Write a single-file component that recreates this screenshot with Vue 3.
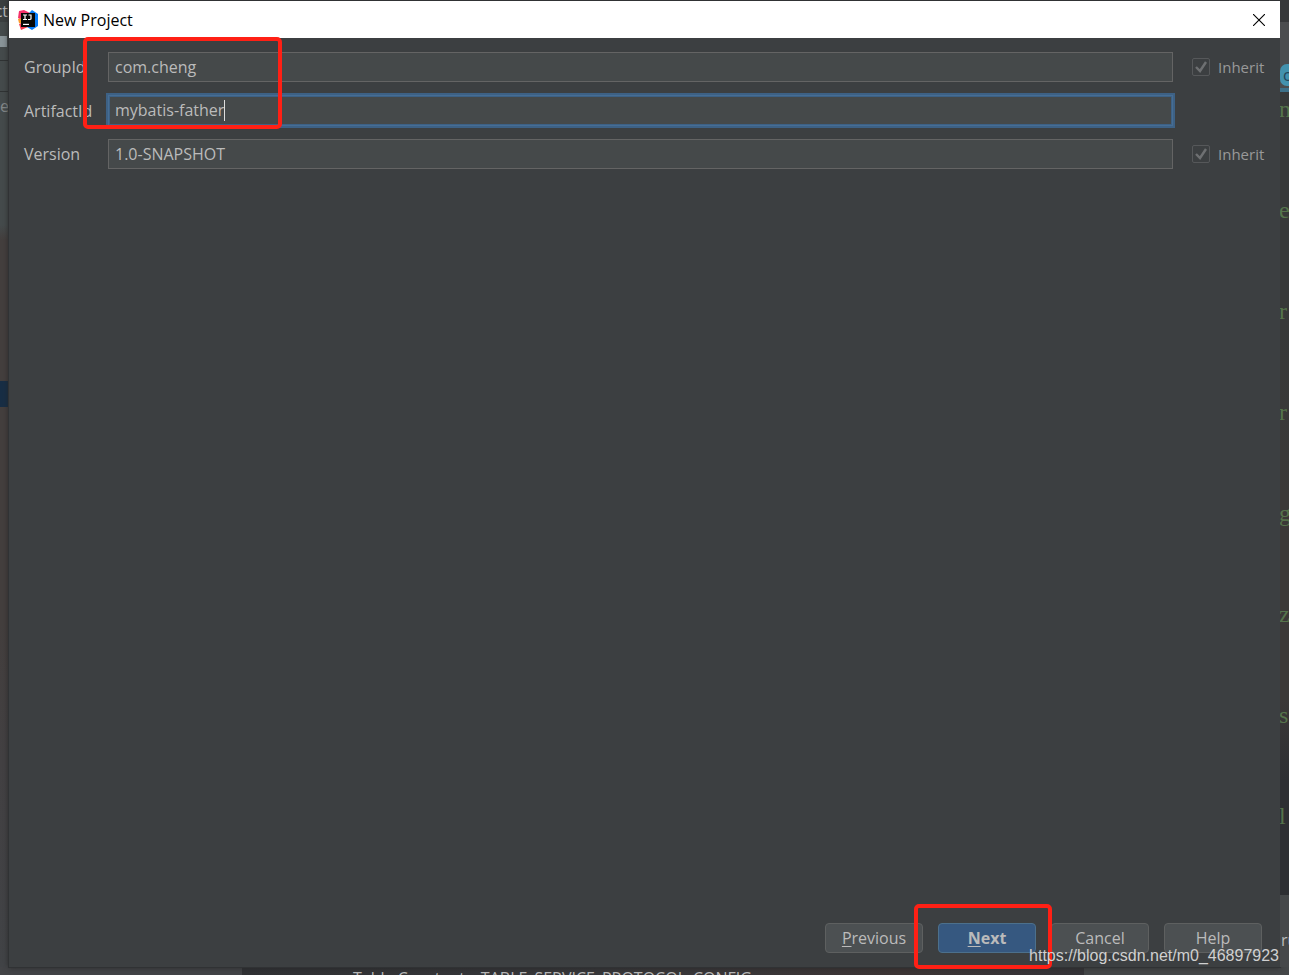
<script setup>
import { ref } from 'vue'

const fields = ref([
  { id: 'group', label: 'GroupId', value: 'com.cheng', inherit: true, active: false },
  { id: 'artifact', label: 'ArtifactId', value: 'mybatis-father', inherit: false, active: true },
  { id: 'version', label: 'Version', value: '1.0-SNAPSHOT', inherit: true, active: false },
])

const buttons = [
  { key: 'P', rest: 'revious', kind: 'mnemonic' },
  { key: 'N', rest: 'ext', kind: 'mnemonic primary' },
  { key: 'C', rest: 'ancel', kind: '' },
  { key: 'H', rest: 'elp', kind: '' },
]

const codeLetters = ['n', 'e', 'r', 'r', 'g', 'z', 's', 'l']
</script>

<template>
  <div class="desktop">
    <aside class="ide-left" aria-hidden="true">
      <span class="menu-end">ct</span>
      <span class="tool-chip"></span>
      <span class="tab-end">e</span>
      <span class="tree"></span>
      <span class="selection"></span>
    </aside>

    <main class="dialog">
      <header class="titlebar">
        <svg class="logo" viewBox="0 0 20 20" aria-hidden="true">
          <path d="M1 1 6 0 12 3 8 12 0 8Z" fill="#f5316a" />
          <path d="M0 9 4 8 7 15 1 13Z" fill="#fd9a2b" />
          <path d="M1 14 7 12 10 17 3 20Z" fill="#f43a50" />
          <path d="M11 3 14 0 20 4V16L14 20 9 17 16 9Z" fill="#087cfa" />
          <path d="M3 3H17V17H3Z" fill="#080808" />
          <path d="M5 5H9M7 5V9.500M5 9.500H9M10.500 5H13V9L12 9.500H10" fill="none" stroke="#fff" stroke-width="1.2" />
          <path d="M5 14.400H11" stroke="#fff" stroke-width="1.2" />
        </svg>
        <h1>New Project</h1>
        <button class="close" type="button" aria-label="Close">
          <svg viewBox="0 0 12 12" aria-hidden="true"><path d="M0 0 12 12M12 0 0 12" stroke="#000" stroke-width="1.1" /></svg>
        </button>
      </header>

      <form class="form" @submit.prevent>
        <div v-for="f in fields" :key="f.id" class="row">
          <label class="name" :for="f.id">{{ f.label }}</label>
          <div class="box" :class="{ active: f.active }">
            <input :id="f.id" v-model="f.value" type="text" spellcheck="false" autocomplete="off" />
            <span v-if="f.active" class="echo" aria-hidden="true">{{ f.value }}</span>
          </div>
          <label v-if="f.inherit" class="inherit">
            <input type="checkbox" checked disabled />
            <svg viewBox="0 0 18 18" aria-hidden="true"><path d="M4 9 8 13 14 4" fill="none" stroke="#6e7072" stroke-width="2.4" /></svg>
            <span>Inherit</span>
          </label>
        </div>
      </form>

      <footer class="actions">
        <button v-for="b in buttons" :key="b.key" type="button" :class="b.kind"><span>{{ b.key }}</span>{{ b.rest }}</button>
      </footer>
      <span class="mark mark-fields" aria-hidden="true"></span>
      <span class="mark mark-next" aria-hidden="true"></span>
    </main>

    <aside class="ide-right" aria-hidden="true">
      <span class="class-tab"><span>c</span></span>
      <span class="code"><span v-for="(c, i) in codeLetters" :key="i">{{ c }}</span></span>
      <span class="notice">ru</span>
    </aside>

    <div class="ide-bottom" aria-hidden="true">
      <span class="console">Table Constants &nbsp;TABLE_SERVICE_PROTOCOL_CONFIG</span>
      <span class="event">were detected...</span>
    </div>
    <span class="watermark">https://blog.csdn.net/m0_46897923</span>
  </div>
</template>

<style>
body { background: #353638; }
</style>

<style scoped>
* { box-sizing: border-box; }
.desktop {
  position: relative;
  display: grid;
  grid-template: 1fr 8px / 9px 1fr 9px;
  height: 100vh;
  overflow: hidden;
  font: 16px/22px "Open Sans", "Noto Sans", sans-serif;
  color: #bbb;
}
.ide-left {
  position: relative;
  overflow: hidden;
  background: linear-gradient(#3b3f40 0 22px, #454b4c 22px 225px, #443f3e 240px 620px, #434143 760px, #424447);
}
.ide-left > span { position: absolute; }
.menu-end { right: 1px; top: 0; }
.tool-chip { left: 0; top: 36px; width: 7px; height: 11px; background: #8a9599; }
.tab-end { right: 0; top: 95px; color: #85898a; }
.tree { left: 0; right: 0; top: 60px; height: 32px; border: solid #303334; border-width: 1px 0; }
.selection { left: 0; right: 0; top: 381px; height: 26px; background: #182e45; }
.dialog {
  position: relative;
  display: flex;
  flex-direction: column;
  min-width: 0;
  margin-top: 1px;
  background: #3c3f41;
  box-shadow: 0 0 0 1px #303234, 0 0 6px #222;
}
.titlebar {
  display: flex;
  align-items: center;
  height: 37px;
  padding: 0 15px 0 9px;
  background: #fff;
  color: #000;
}
.logo { width: 20px; height: 20px; }
h1 { margin: 0 auto 0 5px; font-size: 16px; line-height: 22px; font-weight: 400; }
.close { display: flex; padding: 0; border: 0; background: none; }
.close svg { width: 12px; height: 12px; }
.form { display: grid; gap: 13px; padding: 14px 15px 0; }
.row { display: grid; grid-template-columns: 84px 1fr 92px; align-items: center; }
.box { position: relative; height: 30px; border: 1px solid #646464; background: #45494a; }
.box.active { height: 31px; border-color: #466d94; box-shadow: 0 0 0 2px #3d6185, inset 0 0 0 1px #3d6185; }
.box input {
  display: block;
  width: 100%;
  height: 28px;
  padding: 0 6px;
  border: 0;
  outline: 0;
  background: none;
  color: #bbb;
  font: inherit;
}
.echo {
  position: absolute;
  left: 6px;
  top: 4px;
  height: 21px;
  border-right: 1px solid #ddd;
  color: transparent;
}
.inherit {
  position: relative;
  display: flex;
  align-items: center;
  gap: 8px;
  padding-left: 19px;
  font-size: 15px;
  color: #999;
}
.inherit input {
  appearance: none;
  width: 18px;
  height: 18px;
  margin: 0;
  border: 1px solid #56585a;
  border-radius: 2px;
}
.inherit svg { position: absolute; left: 19px; width: 18px; height: 18px; }
.actions { display: flex; justify-content: flex-end; gap: 15px; margin-top: auto; padding: 0 18px 14px; }
.actions button {
  width: 98px;
  height: 30px;
  padding: 0;
  border: 1px solid #5e6060;
  border-radius: 4px;
  background: #4c5052;
  color: #bbb;
  font: inherit;
}
.actions .primary { border-color: #4c708c; background: #365880; font-weight: 700; }
.mnemonic span { text-decoration: underline; text-decoration-skip-ink: none; text-underline-offset: 2px; }
.mark { position: absolute; border: 4px solid #ff2015; border-radius: 5px; pointer-events: none; }
.mark-fields { left: 74px; top: 36px; width: 199px; height: 92px; }
.mark-next { right: 228px; bottom: -2px; width: 138px; height: 65px; }
.ide-right {
  position: relative;
  overflow: hidden;
  background: linear-gradient(#36383a 0 22px, #4b4d4f 22px 91px, #373838 91px 320px, #3b3837 500px 700px, #2e2f33 780px 895px, #46484a 895px);
}
.class-tab {
  position: absolute;
  left: 0;
  right: 0;
  top: 64px;
  height: 28px;
  border-bottom: 4px solid #3d7088;
  background: #4b4d4f;
  color: #24455a;
}
.class-tab span {
  display: block;
  width: 22px;
  height: 22px;
  padding-left: 3px;
  border-radius: 7px;
  background: #4392ae;
  line-height: 22px;
}
.code {
  position: absolute;
  left: -1px;
  top: 95px;
  display: grid;
  grid-auto-rows: 101px;
  font: 24px/28px "Liberation Serif", serif;
  color: #55734b;
}
.notice { position: absolute; left: 1px; bottom: 16px; }
.ide-bottom {
  grid-column: 1 / -1;
  display: grid;
  grid-template-columns: 242px 842px 1fr;
  overflow: hidden;
  background: linear-gradient(90deg, #434447 242px, #303134 242px, #37373a 600px, #3d3535 900px, #353438 1084px, #454749 1084px);
}
.console { grid-column: 2; padding-left: 111px; white-space: nowrap; }
.event { padding-left: 42px; margin-top: -16px; white-space: nowrap; color: #777; }
.watermark {
  position: absolute;
  right: 10px;
  bottom: 8px;
  font: 16px/22px "Liberation Sans", Arial, sans-serif;
  color: #d0d0d0;
}
</style>
